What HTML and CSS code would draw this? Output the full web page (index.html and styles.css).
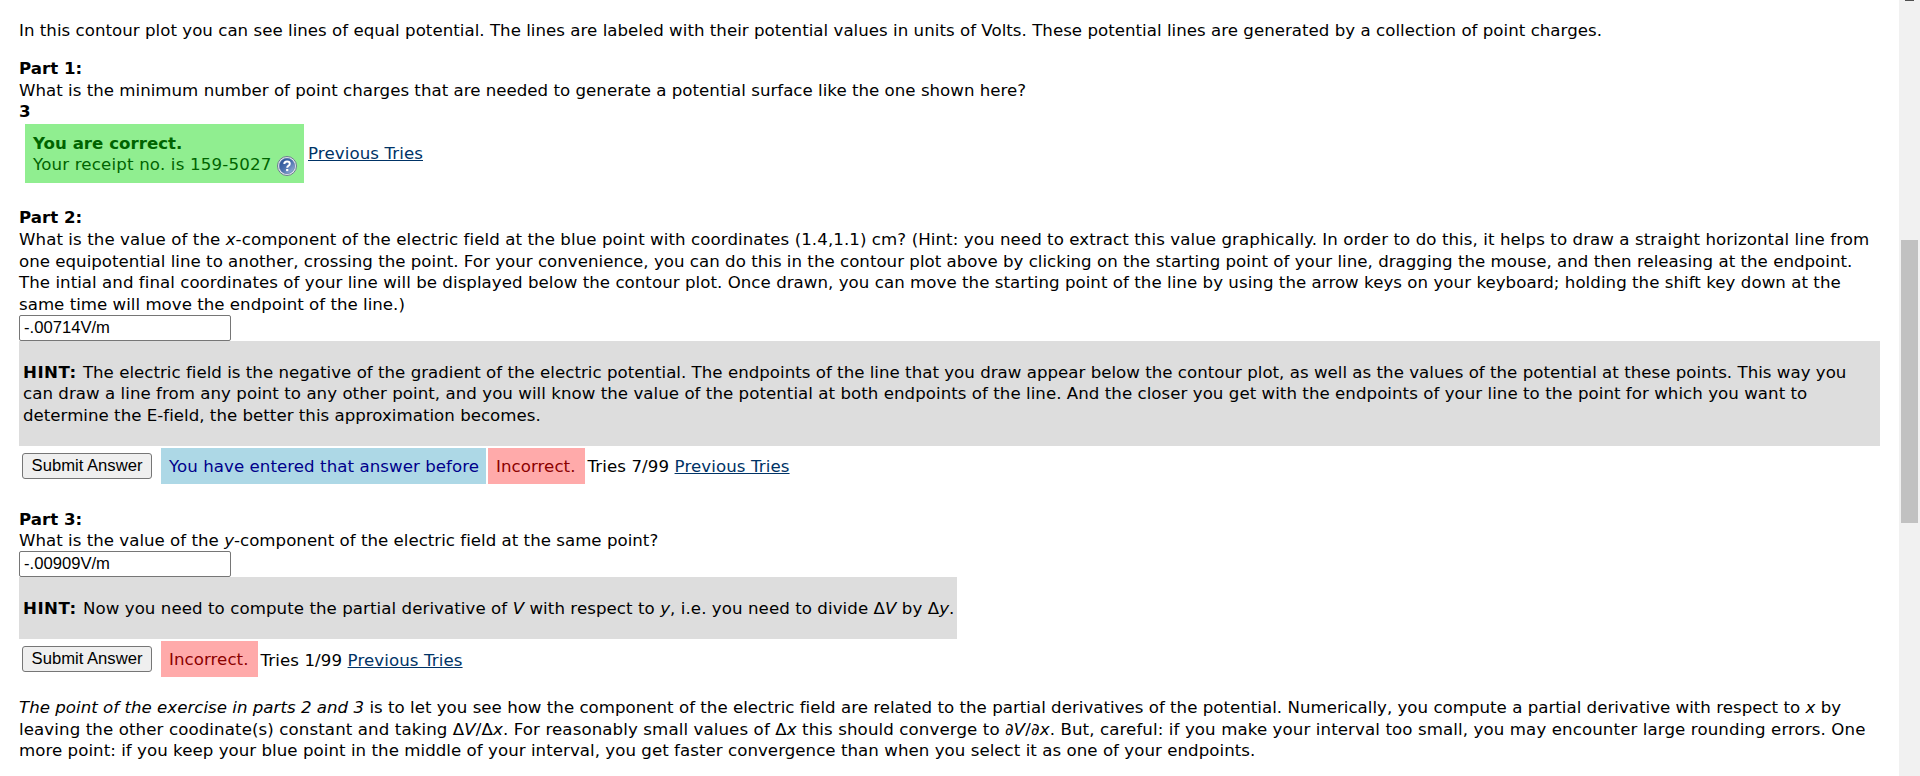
FILE: index.html
```html
<!DOCTYPE html>
<html>
<head>
<meta charset="utf-8">
<title>Equipotential lines</title>
<link rel="stylesheet" href="styles.css">
</head>
<body>
<div class="page">
<div class="problem">
<p class="intro">In this contour plot you can see lines of equal potential. The lines are labeled with their potential values in units of Volts. These potential lines are generated by a collection of point charges.</p>

<div class="part part1">
<b>Part 1:</b><br>
What is the minimum number of point charges that are needed to generate a potential surface like the one shown here?<br>
<b>3</b>
<div class="status">
<div class="correct"><b>You are correct.</b><br><span class="receipt">Your receipt no. is 159-5027</span>
<svg class="help" viewBox="0 0 20 20" width="20" height="20">
<defs><linearGradient id="ball" x1="0" y1="0" x2="1" y2="1"><stop offset="0" stop-color="#214a91"/><stop offset=".5" stop-color="#4b70ae"/><stop offset="1" stop-color="#a9bfe2"/></linearGradient></defs>
<circle cx="10" cy="10" r="9.5" fill="#e4e8f0" stroke="#6d7890"/>
<circle cx="10" cy="10" r="7.7" fill="url(#ball)" stroke="#5270a4" stroke-width=".6"/>
<path d="M7.3 8 Q7.3 5.5 10 5.5 Q12.8 5.5 12.8 7.7 Q12.8 9 11.3 9.8 Q10.2 10.4 10.2 11.8" fill="none" stroke="#fff" stroke-width="2"/>
<rect x="9.1" y="13" width="2.2" height="2.1" fill="#fff"/>
</svg></div>
<span class="tries"><a href="#">Previous Tries</a></span>
</div>
</div>

<div class="part part2">
<b>Part 2:</b><br>
<span class="wider">What is the value of the <i>x</i>-component of the electric field at the blue point with coordinates (1.4,1.1) cm? (Hint: you need to extract this value graphically. In order to do this, it helps to draw a straight horizontal line from</span><br>
one equipotential line to another, crossing the point. For your convenience, you can do this in the contour plot above by clicking on the starting point of your line, dragging the mouse, and then releasing at the endpoint.<br>
<span class="wide">The intial and final coordinates of your line will be displayed below the contour plot. Once drawn, you can move the starting point of the line by using the arrow keys on your keyboard; holding the shift key down at the</span><br>
same time will move the endpoint of the line.)
<input class="answer" type="text" value="-.00714V/m">
<div class="hint"><b>HINT:</b> The electric field is the negative of the gradient of the electric potential. The endpoints of the line that you draw appear below the contour plot, as well as the values of the potential at these points. This way you<br>
<span class="wide">can draw a line from any point to any other point, and you will know the value of the potential at both endpoints of the line. And the closer you get with the endpoints of your line to the point for which you want to</span><br>
determine the E-field, the better this approximation becomes.</div>
<div class="row">
<button class="submit">Submit Answer</button>
<span class="msg before">You have entered that answer before</span>
<span class="msg incorrect">Incorrect.</span>
<span class="tries">Tries 7/99 <a href="#">Previous Tries</a></span>
</div>
</div>

<div class="part part3">
<b>Part 3:</b><br>
What is the value of the <i>y</i>-component of the electric field at the same point?
<input class="answer" type="text" value="-.00909V/m">
<div class="hint short"><b>HINT:</b> Now you need to compute the partial derivative of <i>V</i> with respect to <i>y</i>, i.e. you need to divide Δ<i>V</i> by Δ<i>y</i>.</div>
<div class="row">
<button class="submit">Submit Answer</button>
<span class="msg incorrect">Incorrect.</span>
<span class="tries">Tries 1/99 <a href="#">Previous Tries</a></span>
</div>
</div>

<p class="closing"><i>The point of the exercise in parts 2 and 3</i> is to let you see how the component of the electric field are related to the partial derivatives of the potential. Numerically, you compute a partial derivative with respect to <i>x</i> by<br>
<span class="widest">leaving the other coodinate(s) constant and taking Δ<i>V</i>/Δ<i>x</i>. For reasonably small values of Δ<i>x</i> this should converge to ∂<i>V</i>/∂<i>x</i>. But, careful: if you make your interval too small, you may encounter large rounding errors. One</span><br>
<span class="wide">more point: if you keep your blue point in the middle of your interval, you get faster convergence than when you select it as one of your endpoints.</span></p>
</div>
<div class="scrollbar"><div class="arrow"></div><div class="thumb"></div></div>
</div>
</body>
</html>
```

FILE: styles.css
```css
body{margin:0;background:#fff;color:#000;font-family:Verdana,"DejaVu Sans",sans-serif;font-size:16.64px;line-height:21.6px;letter-spacing:.018px;overflow:hidden}
a{color:#003366;text-decoration:underline}
.page{display:flex;height:776px}
.problem{flex:1;padding:20px 0 0 19px;white-space:nowrap;overflow:hidden}
.wide{letter-spacing:.045px}
.wider{letter-spacing:.08px}
.widest{letter-spacing:.105px}
.intro{margin:0 0 16.4px;letter-spacing:.028px}
.status{display:flex;align-items:center;gap:4px;height:59px;margin:1px 0 0 6px}
.correct{box-sizing:border-box;width:279px;height:59px;padding:9px 8px 7px;background:#90ee90;color:#006400}
.receipt{letter-spacing:.18px}
.help{vertical-align:-6px}
.part2{margin-top:24.6px}
.answer{display:block;box-sizing:border-box;width:212px;height:26px;margin:-.6px 0 0;padding:1px 4px;border:1px solid #767676;border-radius:2px;background:#fff;font:16.64px "Liberation Sans",Arial,sans-serif}
.hint{box-sizing:border-box;width:1861px;height:105px;padding:21px 4px;background:#ddd}
.hint b{margin-right:1px;letter-spacing:.5px}
.short{width:938px;height:62px;letter-spacing:.07px}
.row{display:flex;align-items:center;height:36px;margin:2px 0 0 3px}
.submit{box-sizing:border-box;width:130px;height:26px;margin:0 9px 0 0;padding:0;border:1px solid #767676;border-radius:3px;background:#efefef;color:#000;font:16.64px "Liberation Sans",Arial,sans-serif}
.msg{box-sizing:border-box;height:36px;margin-right:3px;padding:8px 8px 6px;letter-spacing:.06px}
.before{width:325px;margin-right:2px;background:#add8e6;color:#00008b}
.incorrect{width:96.5px;background:#faa;color:#8b0000}
.tries{padding-top:2px;letter-spacing:.1px}
.part3{margin-top:25px}
.closing{margin:19.6px 0 0}
.scrollbar{width:21px;background:#f1f1f1}
.arrow{width:9px;height:1px;margin-left:6px;background:#505050}
.thumb{width:17px;height:283px;margin:239px 0 0 2px;background:#c1c1c1}
```
